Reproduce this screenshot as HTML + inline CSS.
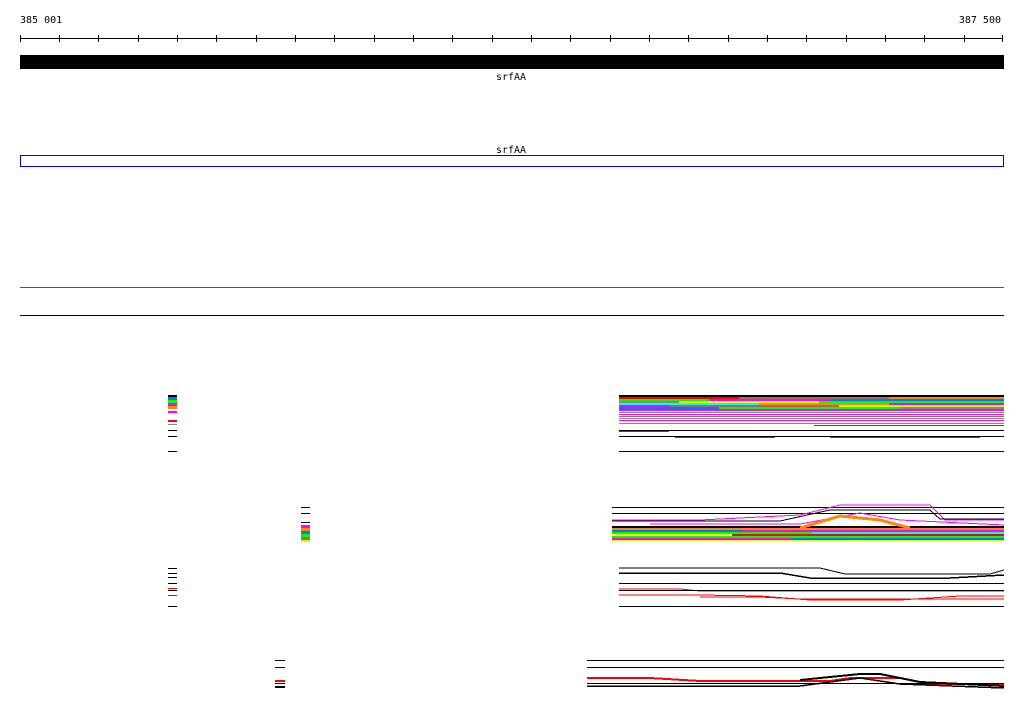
<!DOCTYPE html>
<html><head><style>
html,body{margin:0;padding:0;background:#fff;width:1024px;height:714px;overflow:hidden}
svg{display:block}
text{font-family:"DejaVu Sans Mono","Liberation Mono",monospace;font-size:10px}
</style></head><body>
<svg width="1024" height="714" viewBox="0 0 1024 714" shape-rendering="crispEdges">
<text x="20" y="23">385 001</text>
<text x="1001" y="23" text-anchor="end">387 500</text>
<line x1="20" y1="38.5" x2="1003" y2="38.5" stroke="#000"/>
<g stroke="#000">
<path d="M20.5 35v7M59.5 35v7M98.5 35v7M138.5 35v7M177.5 35v7M216.5 35v7M256.5 35v7M295.5 35v7M334.5 35v7M374.5 35v7M413.5 35v7M452.5 35v7M492.5 35v7M531.5 35v7M570.5 35v7M610.5 35v7M649.5 35v7M688.5 35v7M728.5 35v7M767.5 35v7M806.5 35v7M846.5 35v7M885.5 35v7M924.5 35v7M964.5 35v7M1002.5 35v7"/>
</g>
<rect x="20" y="55" width="984" height="14" fill="#000"/>
<text x="511" y="80" text-anchor="middle">srfAA</text>
<text x="511" y="153" text-anchor="middle">srfAA</text>
<rect x="20.5" y="155.5" width="983" height="11" fill="none" stroke="#00f"/>
<line x1="20" y1="287.5" x2="1004" y2="287.5" stroke="#555"/>
<line x1="20" y1="315.5" x2="1004" y2="315.5" stroke="#000"/>

<!-- block 1 -->
<g>
<rect x="619" y="395" width="385" height="2" fill="#000"/>
<rect x="619" y="397" width="120" height="2" fill="#f00"/><rect x="739" y="397" width="150" height="2" fill="#a66"/><rect x="889" y="397" width="115" height="2" fill="#f80"/>
<rect x="619" y="399" width="90" height="2" fill="#0f0"/><rect x="709" y="399" width="120" height="2" fill="#f0f"/><rect x="829" y="399" width="175" height="2" fill="#07f"/>
<rect x="619" y="401" width="60" height="2" fill="#888"/><rect x="679" y="401" width="140" height="2" fill="#ff0"/><rect x="819" y="401" width="185" height="2" fill="#0f0"/>
<rect x="619" y="403" width="140" height="2" fill="#0ff"/><rect x="759" y="403" width="130" height="2" fill="#f80"/><rect x="889" y="403" width="115" height="2" fill="#f0f"/>
<rect x="619" y="405" width="50" height="2" fill="#f0f"/><rect x="669" y="405" width="170" height="2" fill="#a66"/><rect x="839" y="405" width="165" height="2" fill="#cf0"/>
<rect x="619" y="407" width="100" height="2" fill="#07f"/><rect x="719" y="407" width="180" height="2" fill="#0f0"/><rect x="899" y="407" width="105" height="2" fill="#888"/>
<rect x="619" y="409" width="140" height="2" fill="#f0f"/><rect x="759" y="409" width="245" height="2" fill="#f0f"/>
<rect x="619" y="412" width="385" height="1" fill="#888"/>
<rect x="619" y="414" width="385" height="1" fill="#f0f"/>
<rect x="619" y="416" width="385" height="1" fill="#a66"/>
<rect x="619" y="418" width="385" height="1" fill="#888"/>
<rect x="619" y="420" width="385" height="1" fill="#f0f"/>
<rect x="619" y="423" width="385" height="1" fill="#888"/>
<rect x="814" y="425" width="190" height="1" fill="#f00"/>
<rect x="619" y="430" width="385" height="1" fill="#000"/>
<rect x="619" y="431" width="50" height="1" fill="#f00"/>
<rect x="619" y="436" width="385" height="1" fill="#000"/>
<rect x="675" y="437" width="100" height="1" fill="#f00"/><rect x="830" y="437" width="150" height="1" fill="#f00"/>
<rect x="619" y="451" width="385" height="1" fill="#000"/>
</g>
<!-- legend 1 -->
<rect x="168" y="395" width="9" height="2" fill="#000"/><rect x="168" y="397" width="9" height="3" fill="#07f"/><rect x="168" y="400" width="9" height="3" fill="#0f0"/><rect x="168" y="403" width="9" height="3" fill="#f0f"/><rect x="168" y="406" width="9" height="3" fill="#f80"/><rect x="168" y="411" width="9" height="2" fill="#f0f"/><rect x="168" y="420" width="9" height="2" fill="#f00"/><rect x="168" y="424" width="9" height="1" fill="#888"/><rect x="168" y="430" width="9" height="1" fill="#000"/><rect x="168" y="436" width="9" height="1" fill="#000"/><rect x="168" y="451" width="9" height="1" fill="#000"/>

<!-- block 2 -->
<rect x="612" y="507" width="392" height="1" fill="#000"/>
<rect x="612" y="513" width="392" height="1" fill="#000"/>
<path d="M612 520H700L800 515L840 505H930L945 520H1004" stroke="#f0f" fill="none"/>
<path d="M612 521H780L830 510H930L940 519H1004" stroke="#000" fill="none"/>
<path d="M650 524H800L860 513L900 520L1004 525" stroke="#f0f" fill="none"/>
<rect x="612" y="526" width="392" height="2" fill="#000"/>
<rect x="612" y="528" width="392" height="2" fill="#f80"/>
<rect x="612" y="530" width="130" height="2" fill="#07f"/><rect x="742" y="530" width="262" height="2" fill="#f0f"/>
<rect x="612" y="532" width="200" height="2" fill="#0f0"/><rect x="812" y="532" width="192" height="2" fill="#0ff"/>
<rect x="612" y="534" width="120" height="2" fill="#ff0"/><rect x="732" y="534" width="272" height="2" fill="#f00"/>
<rect x="612" y="536" width="392" height="2" fill="#0f0"/>
<rect x="612" y="538" width="180" height="2" fill="#f0f"/><rect x="792" y="538" width="212" height="2" fill="#07f"/>
<rect x="612" y="540" width="392" height="1" fill="#cf0"/>
<path d="M800 528L840 516L880 520L910 528" stroke="#f80" stroke-width="3" fill="none"/>
<!-- legend 2 -->
<rect x="301" y="507" width="9" height="1" fill="#000"/><rect x="301" y="513" width="9" height="1" fill="#000"/><rect x="301" y="522" width="9" height="1" fill="#000"/><rect x="301" y="525" width="9" height="3" fill="#f0f"/><rect x="301" y="528" width="9" height="3" fill="#f80"/><rect x="301" y="531" width="9" height="3" fill="#07f"/><rect x="301" y="534" width="9" height="3" fill="#0f0"/><rect x="301" y="537" width="9" height="3" fill="#a66"/><rect x="301" y="540" width="9" height="2" fill="#cf0"/>

<!-- block 3 -->
<path d="M619 568H820L845 574H990L1004 570" stroke="#000" fill="none"/>
<path d="M619 573H780L810 578H950L1004 575" stroke="#000" fill="none" stroke-width="1.5"/>
<rect x="619" y="583" width="385" height="1" fill="#000"/>
<path d="M619 589H680L700 591H1004" stroke="#f00" fill="none"/>
<rect x="619" y="590" width="385" height="1" fill="#000"/>
<path d="M619 595H700L760 596L810 600H900L960 596H1004" stroke="#f00" fill="none"/>
<path d="M700 597H760L800 599H1004" stroke="#f00" fill="none"/>
<rect x="619" y="606" width="385" height="1" fill="#000"/>
<!-- legend 3 -->
<rect x="168" y="568" width="9" height="1" fill="#000"/><rect x="168" y="573" width="9" height="1" fill="#000"/><rect x="168" y="577" width="9" height="1" fill="#000"/><rect x="168" y="583" width="9" height="1" fill="#000"/><rect x="168" y="588" width="9" height="1" fill="#f00"/><rect x="168" y="590" width="9" height="1" fill="#000"/><rect x="168" y="595" width="9" height="1" fill="#f00"/><rect x="168" y="606" width="9" height="1" fill="#000"/>

<!-- block 4 -->
<rect x="587" y="660" width="417" height="1" fill="#000"/>
<rect x="587" y="667" width="417" height="1" fill="#000"/>
<path d="M587 678H650L700 681H830L850 678H900L930 684H1004" stroke="#f00" stroke-width="2" fill="none"/>
<path d="M800 680L860 674H880L920 682L1004 686" stroke="#000" stroke-width="2" fill="none"/>
<rect x="587" y="683" width="417" height="1" fill="#000"/>
<path d="M587 686H800L860 678L900 684L1004 688" stroke="#000" stroke-width="1.5" fill="none"/>
<!-- legend 4 -->
<rect x="275" y="660" width="10" height="1" fill="#000"/><rect x="275" y="667" width="10" height="1" fill="#000"/><rect x="275" y="680" width="10" height="2" fill="#f00"/><rect x="275" y="683" width="10" height="1" fill="#000"/><rect x="275" y="686" width="10" height="2" fill="#000"/>
</svg>
</body></html>
